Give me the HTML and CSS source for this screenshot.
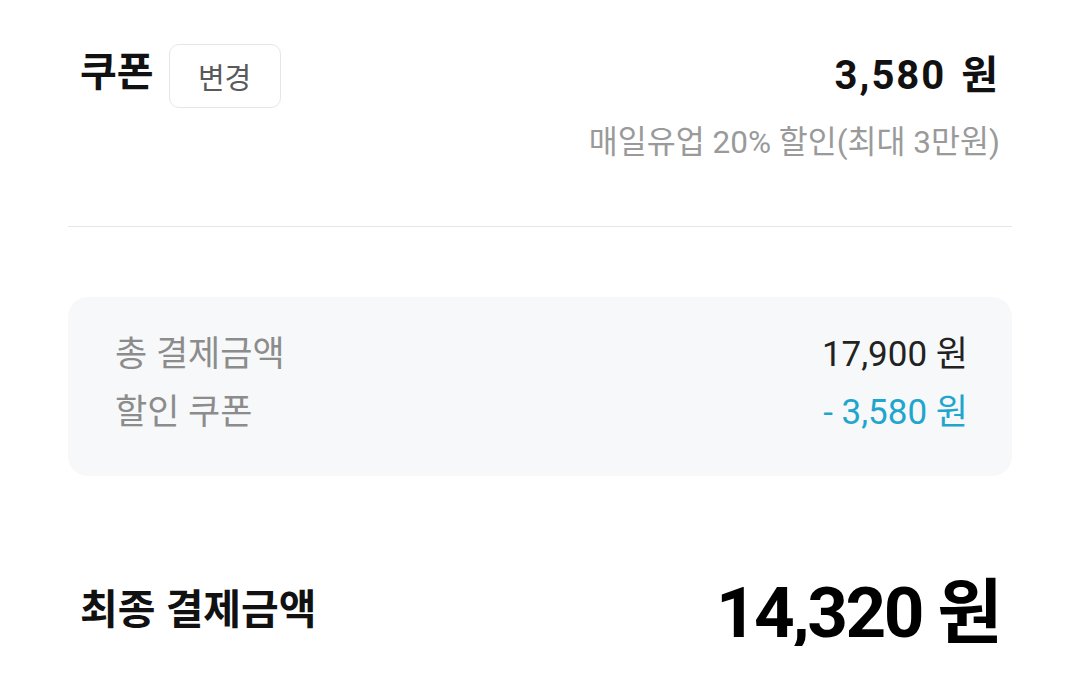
FILE: index.html
```html
<!DOCTYPE html>
<html lang="ko">
<head>
<meta charset="utf-8">
<link rel="stylesheet" href="styles.css">
</head>
<body>
<div class="page">
  <section class="coupon">
    <div class="coupon-row">
      <div class="coupon-left">
        <span class="coupon-title">쿠폰</span>
        <button class="change-btn">변경</button>
      </div>
      <div class="coupon-amount">3,580 원</div>
    </div>
    <div class="coupon-desc">매일유업 20% 할인(최대 3만원)</div>
  </section>
  <hr class="divider">
  <section class="summary">
    <div class="summary-row">
      <span class="summary-label">총 결제금액</span>
      <span class="summary-value">17,900 원</span>
    </div>
    <div class="summary-row">
      <span class="summary-label">할인 쿠폰</span>
      <span class="summary-value discount">- 3,580 원</span>
    </div>
  </section>
  <section class="final">
    <span class="final-label">최종 결제금액</span>
    <span class="final-value">14,320 원</span>
  </section>
</div>
</body>
</html>
```
FILE: styles.css
```css
* { box-sizing: border-box; }
html, body { margin: 0; padding: 0; background: #fff; }
body {
  font-family: "Roboto", "Noto Sans CJK KR", sans-serif;
  color: #111;
}
.page {
  padding: 0 68px;
}
.coupon {
  padding: 44px 12px 0;
}
.coupon-row {
  display: flex;
  justify-content: space-between;
  align-items: center;
  height: 64px;
}
.coupon-left {
  display: flex;
  align-items: center;
  gap: 15px;
}
.coupon-title {
  font-size: 40px;
  font-weight: 700;
  line-height: 64px;
  margin-top: -6px;
  color: #111;
}
.change-btn {
  width: 112px;
  height: 64px;
  border: 1.5px solid #e6e6e6;
  border-radius: 10px;
  background: #fff;
  font-family: "Roboto", "Noto Sans CJK KR", sans-serif;
  font-size: 29px;
  color: #5a5a5a;
  padding: 0;
}
.coupon-amount {
  font-size: 40px;
  font-weight: 700;
  color: #111;
  line-height: 64px;
  letter-spacing: 2px;
  word-spacing: 3px;
}
.coupon-desc {
  margin-top: 17px;
  text-align: right;
  font-size: 31.5px;
  line-height: 36px;
  color: #9a9a9a;
}
.divider {
  margin: 65px 0 0;
  border: 0;
  height: 1px;
  background: #e6e6e6;
}
.summary {
  margin-top: 70px;
  background: #f7f8fa;
  border-radius: 20px;
  padding: 33px 44px 48px 47px;
  display: flex;
  flex-direction: column;
  gap: 18px;
}
.summary-row {
  display: flex;
  justify-content: space-between;
  align-items: center;
  height: 40px;
  font-size: 35px;
}
.summary-label {
  color: #8c8c8c;
}
.summary-value {
  color: #222;
}
.summary-value.discount {
  color: #1fa6cc;
}
.final {
  margin-top: 90px;
  padding: 0 12px;
  display: flex;
  justify-content: space-between;
  align-items: center;
  height: 80px;
}
.final-label {
  font-size: 41px;
  font-weight: 700;
  color: #111;
}
.final-value {
  font-size: 71px;
  font-weight: 700;
  color: #000;
  letter-spacing: -2.5px;
}
```
